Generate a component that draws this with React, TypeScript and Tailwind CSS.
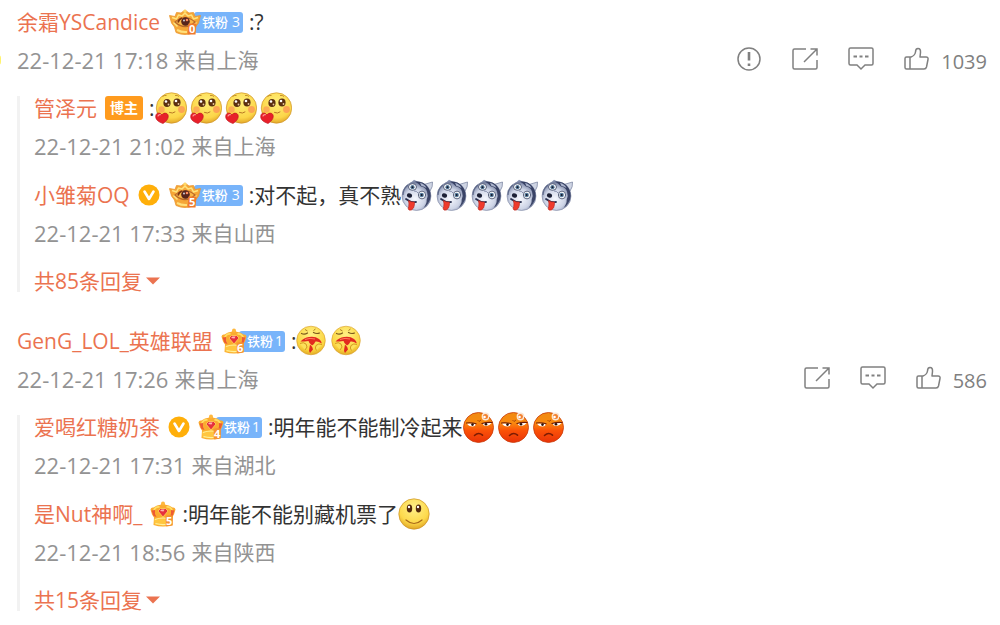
import type { ReactNode } from "react";

type EmojiKind = "love" | "husky" | "melon" | "angry" | "smile";

function LoveEmoji() {
  return (
    <svg className="h-8 w-8" viewBox="0 0 32 32" aria-hidden="true">
      <defs>
        <radialGradient id="love-face" cx="0.5" cy="0.3" r="0.75">
          <stop offset="0" stopColor="#ffee78" />
          <stop offset="0.7" stopColor="#fcd648" />
          <stop offset="1" stopColor="#dd9c22" />
        </radialGradient>
      </defs>
      <circle cx="16.5" cy="16" r="15.2" fill="url(#love-face)" stroke="#cf9228" strokeWidth="0.7" />
      <circle cx="6.5" cy="17.5" r="3.2" fill="#fc9a55" opacity="0.7" />
      <circle cx="26.5" cy="17.5" r="3.4" fill="#fc9a55" opacity="0.85" />
      <path d="M7.5 4.5q2-1.5 4-1M20 3.5q2.5-.5 4 1" fill="none" stroke="#b57b20" strokeWidth="0.8" />
      <ellipse cx="12" cy="11" rx="3.6" ry="4" fill="#5b2f10" />
      <ellipse cx="22" cy="10.5" rx="3.6" ry="4" fill="#5b2f10" />
      <circle cx="11" cy="9.5" r="1.3" fill="#fff" />
      <circle cx="21" cy="9" r="1.3" fill="#fff" />
      <circle cx="13.5" cy="12.5" r="0.9" fill="#e9c9a0" />
      <circle cx="23.5" cy="12" r="0.9" fill="#e9c9a0" />
      <path d="M14.5 20.5q3 1.5 5.5-.5" fill="none" stroke="#b06c1e" strokeWidth="0.9" strokeLinecap="round" />
      <path d="M8 31.5C3 30 0 27 .8 23.5c.7-3.2 4.5-3.3 6-.7 1.8-2.5 5.8-2.2 6.4.8.5 3-2 6-5.2 7.900z" fill="#e8202a" stroke="#b8101c" strokeWidth="0.6" />
      <path d="M3 24q.7-1.7 2.3-1.4" stroke="#ff9a9a" strokeWidth="1.2" fill="none" strokeLinecap="round" />
    </svg>
  );
}

function HuskyEmoji() {
  return (
    <svg className="h-8 w-8" viewBox="0 0 32 32" aria-hidden="true">
      <defs>
        <radialGradient id="husky-face" cx="0.45" cy="0.6" r="0.58">
          <stop offset="0" stopColor="#f6f8fe" />
          <stop offset="0.6" stopColor="#cdd4e6" />
          <stop offset="1" stopColor="#6f7a9c" />
        </radialGradient>
      </defs>
      <path d="M9 4.5 13 .8l4 2z" fill="#8a94b2" />
      <path d="M23 5.5 31.500 3q.5 5-2.500 9z" fill="#cfd5e4" stroke="#808aa6" strokeWidth="0.8" />
      <circle cx="15.5" cy="17" r="14.5" fill="url(#husky-face)" stroke="#7d86a2" strokeWidth="0.6" />
      <path d="M14 2.6q9-.5 13.5 6.400 4.500 8-.5 15.500-1.800 3-4.500 4.500 3.500-4.500 3.200-8.500 1.800-4 .3-8-1.500-4.500-6-5-3-3.500-6-4.900z" fill="#2c3558" opacity="0.85" />
      <path d="M19 4q4.5.8 6.500 5-3.500-2-5-2z" fill="#aab3cc" />
      <path d="M2 16q0-6 5-10" fill="none" stroke="#5d6888" strokeWidth="1.2" />
      <path d="M13 12q3 0 4 2" fill="none" stroke="#8a93ae" strokeWidth="1" />
      <ellipse cx="11.5" cy="8" rx="4" ry="3.3" fill="#fff" stroke="#49536f" strokeWidth="0.9" />
      <circle cx="11.5" cy="8.2" r="2.1" fill="#557a9c" />
      <circle cx="11.5" cy="8.2" r="1" fill="#141828" />
      <ellipse cx="21" cy="16" rx="3.6" ry="3.9" fill="#fff" stroke="#49536f" strokeWidth="0.9" />
      <circle cx="20.7" cy="16" r="2.2" fill="#557a9c" />
      <circle cx="20.7" cy="16" r="1" fill="#141828" />
      <ellipse cx="8.5" cy="16.5" rx="2.600" ry="2.200" fill="#1c2136" transform="rotate(20 8.5 16.5)" />
      <path d="M5 20q5 4 10 3" fill="none" stroke="#2c3352" strokeWidth="1.8" strokeLinecap="round" />
      <path d="M7.5 21.5q3.500 2 6 1.500.3 3.500-1 6-2 3-4.500 2-1.500-1-.3-3.500.5-2.500-.2-6z" fill="#ef3a2c" stroke="#b3231d" strokeWidth="0.6" />
    </svg>
  );
}

function MelonEmoji() {
  return (
    <svg className="h-8 w-8" viewBox="0 0 32 32" aria-hidden="true">
      <defs>
        <radialGradient id="melon-face" cx="0.5" cy="0.3" r="0.75">
          <stop offset="0" stopColor="#fff184" />
          <stop offset="0.7" stopColor="#fbd541" />
          <stop offset="1" stopColor="#dba01f" />
        </radialGradient>
      </defs>
      <circle cx="15" cy="15.5" r="14.3" fill="url(#melon-face)" stroke="#d79b28" strokeWidth="0.6" />
      <path d="M5.5 8.5q3 1.500 6-.5M17.5 7.5q3 1.700 6 .5" fill="none" stroke="#7c5a1c" strokeWidth="1.2" strokeLinecap="round" />
      <path d="M9 4.5 11.5 6M19.5 4l-2 1.5" stroke="#a5751d" strokeWidth="0.9" />
      <path d="M4.5 16.5Q8 12.5 13 12q6-1 10 2 3 2.5 2.500 4.500-3-2.500-6-2-1 2.500-3.500 4-3-2-3.500-4.500-4 .5-8 .5z" fill="#e22a1f" />
      <path d="M9 14.5q5-2 10-.5" fill="none" stroke="#ff7a5c" strokeWidth="1" />
      <path d="M14 19.5q2.5 2 3 5l-3 3.5q-1.500-2-.8-4z" fill="#e22a1f" />
      <path d="M4 18.5q3.500-1.800 6 .5 2.500 3-1 6M26 19.5q-3.500-1.500-6 1-1.500 2.500.5 5" fill="#fce05a" stroke="#cf921d" strokeWidth="0.9" />
    </svg>
  );
}

function AngryEmoji() {
  return (
    <svg className="h-8 w-8" viewBox="0 0 32 32" aria-hidden="true">
      <defs>
        <linearGradient id="angry-face" x1="0" y1="0" x2="0" y2="1">
          <stop offset="0" stopColor="#f08a10" />
          <stop offset="0.35" stopColor="#f98a10" />
          <stop offset="0.6" stopColor="#fb5208" />
          <stop offset="1" stopColor="#e83208" />
        </linearGradient>
      </defs>
      <circle cx="15.5" cy="16.5" r="15" fill="url(#angry-face)" stroke="#c93a08" strokeWidth="0.8" />
      <path d="M4 12.5h8.500q.5 3-3 3-4 0-5.500-3zM28.500 12h-9q.5 3 4 3 3.500-.5 5-3z" fill="#fff" />
      <path d="M3.500 12q5-.8 9.500.8M29 11.500q-5-.5-10 1" fill="none" stroke="#6e1c05" strokeWidth="1.2" strokeLinecap="round" />
      <circle cx="9.5" cy="13.6" r="1.3" fill="#2c0e04" />
      <circle cx="23" cy="13.3" r="1.3" fill="#2c0e04" />
      <path d="M11.5 24.5q4-3.800 8-.3" fill="none" stroke="#7c1c04" strokeWidth="1.6" strokeLinecap="round" />
      <path d="m14.5 9 1.500 1.500L18 9" fill="none" stroke="#a4410a" strokeWidth="0.9" />
      <circle cx="22.5" cy="5.5" r="3.2" fill="#f2812f" stroke="#fbe6d4" strokeWidth="1.4" />
      <circle cx="21.5" cy="6" r="1.3" fill="#fff" />
    </svg>
  );
}

function SmileEmoji() {
  return (
    <svg className="h-8 w-8" viewBox="0 0 32 32" aria-hidden="true">
      <defs>
        <radialGradient id="smile-face" cx="0.5" cy="0.3" r="0.75">
          <stop offset="0" stopColor="#fff08a" />
          <stop offset="0.65" stopColor="#fdd94b" />
          <stop offset="1" stopColor="#d99a1c" />
        </radialGradient>
      </defs>
      <circle cx="16" cy="16" r="15.2" fill="url(#smile-face)" stroke="#cb9226" strokeWidth="0.7" />
      <ellipse cx="11.5" cy="10.5" rx="2.7" ry="4" fill="#54290c" />
      <ellipse cx="20.5" cy="10.5" rx="2.7" ry="4" fill="#54290c" />
      <circle cx="11" cy="9" r="1.2" fill="#fff" />
      <circle cx="20" cy="9" r="1.2" fill="#fff" />
      <path d="M8 22q8 7 16 0" fill="none" stroke="#a8681a" strokeWidth="1.2" strokeLinecap="round" />
    </svg>
  );
}

const emojis: Record<EmojiKind, () => ReactNode> = {
  love: LoveEmoji,
  husky: HuskyEmoji,
  melon: MelonEmoji,
  angry: AngryEmoji,
  smile: SmileEmoji,
};

function Verified() {
  return (
    <svg className="h-[22px] w-[22px] shrink-0" viewBox="0 0 22 22" role="img" aria-label="认证">
      <circle cx="11" cy="11" r="10.5" fill="#ffaf0a" />
      <path d="m6.5 7.5 4.5 7.5 4.5-7.5" fill="none" stroke="#fff" strokeWidth="2.6" strokeLinecap="round" strokeLinejoin="round" />
    </svg>
  );
}

function WingedCrown({ rank }: { rank: string }) {
  return (
    <svg className="relative h-[26px] w-[34px] shrink-0 overflow-visible" viewBox="-1 0 34 26" aria-hidden="true">
      <path d="M.5 6.5 6 7.5l1.5-4L12 4l4-3 4 3 4.5-.5 1.500 4 5.500-1-2 7.500-3 4-1.500 5.500q-9 4-18 0L5.500 18l-3-4z" fill="#f6a637" stroke="#ea9730" strokeWidth="0.8" strokeLinejoin="round" />
      <path d="M3 8.5 7.500 10l2-4 3.500 1 3-3 3 3 3.500-1 2 4L29 8.500M4.500 13.500l4 4M27.500 13.500l-4 4" fill="none" stroke="#ffe37d" strokeWidth="1.6" strokeLinejoin="round" />
      <path d="M6 13Q16 4.500 26 13 16 22 6 13z" fill="#fbb746" stroke="#b8682a" strokeWidth="1.2" />
      <path d="M9 13.5q1-3.500 4-4.500" fill="none" stroke="#7c3516" strokeWidth="1.6" />
      <circle cx="16.5" cy="12.5" r="4.3" fill="#57241d" />
      <circle cx="18" cy="11" r="1.3" fill="#ff8d62" />
      <circle cx="15" cy="11.5" r="0.9" fill="#dbe0ea" />
      <path d="M8 21q5 2.500 10 2" fill="none" stroke="#ffe07c" strokeWidth="2" />
      <circle cx="16" cy="2.2" r="1.6" fill="#ffd765" />
      <path d="M19.500 14.500h8L26.500 25.500H18.500z" fill="#ef7a2e" />
      <text x="20" y="24" fontSize="11" fontWeight="700" fill="#fff">{rank}</text>
    </svg>
  );
}

function Crown({ rank }: { rank: string }) {
  return (
    <svg className="relative h-[26px] w-[26px] shrink-0 overflow-visible" viewBox="0 0 26 26" aria-hidden="true">
      <path d="M.5 8.5Q1 6 3.500 6.500L7 4.500l3.500-.8L13 1.500l2.500 2.200 3.500.8 3.500 2q2.500-.5 3 2l-1.500 5-2 3 .5 7.500q-9.500 3-19 0l.5-7.500-2-3z" fill="#fbab2f" />
      <path d="M3.500 11q1-5.500 6-5M22.500 11q-1-5.500-6-5" fill="none" stroke="#ffdd63" strokeWidth="1.8" />
      <circle cx="13" cy="2.5" r="2" fill="#ffb83e" />
      <path d="M1.500 9.500 5 9v4l1.500 3-3-1zM24.500 9.500 21 9v4l-1.500 3 3-1z" fill="#ee5a34" />
      <path d="M8 10 10.500 7.500h5L18 10l-5 6z" fill="#e6303e" stroke="#ffd55c" strokeWidth="0.8" />
      <path d="M10 10l1.500-1.500h3l-1 2z" fill="#ffb5b0" />
      <path d="M4 18q9-3.500 18 0l-.5 5.500q-8.500 2-17 0z" fill="#ffc640" />
      <path d="M5 18.500q8-3 16 0M5.500 22.500q5 1.500 10 1" fill="none" stroke="#fff09a" strokeWidth="1.2" />
      <path d="M15.5 15q3.500-2 7.500 0l-.3 9.500q-3 1-6.700.8z" fill="#f69331" />
      <text x="16" y="24" fontSize="11" fontWeight="700" fill="#fff">{rank}</text>
    </svg>
  );
}

function FanBadge({ level, rank }: { level: 1 | 3; rank: string }) {
  return (
    <span className="flex shrink-0 items-center">
      {level === 3 ? <WingedCrown rank={rank} /> : <Crown rank={rank} />}
      <span
        className={`-ml-2 flex h-[21px] items-center rounded-[3px] bg-[#78b4fa] pl-2 text-[13px] font-medium text-white ${
          level === 3 ? "gap-1 pr-[3px]" : "gap-0.5 pr-0.5"
        }`}
      >
        铁粉<span className="text-[14px]">{level}</span>
      </span>
    </span>
  );
}

function CommentLine({ name, badges, text, emoji, count = 0 }: {
  name: string;
  badges?: ReactNode;
  text: string;
  emoji?: EmojiKind;
  count?: number;
}) {
  const Emoji = emoji ? emojis[emoji] : null;
  return (
    <div className="flex h-6 items-center whitespace-nowrap">
      <a href="#" className="text-[#eb7350]">{name}</a>
      {badges && <span className="ml-2 flex items-center gap-2">{badges}</span>}
      <p className="ml-[6px] flex items-center text-[#333]">
        {text}
        {Emoji && (
          <span className="flex gap-[3px]">
            {Array.from({ length: count }, (_, i) => <Emoji key={i} />)}
          </span>
        )}
      </p>
    </div>
  );
}

function Meta({ time, place }: { time: string; place: string }) {
  return (
    <p className="flex h-6 items-center gap-[6px] whitespace-nowrap text-[#939393]">
      <time className="text-[22px]">{time}</time>
      <span>来自{place}</span>
    </p>
  );
}

const iconProps = {
  className: "h-[26px] w-[26px]",
  viewBox: "0 0 26 26",
  fill: "none",
  stroke: "currentColor",
  strokeWidth: 1.5,
  "aria-hidden": true,
} as const;

function Actions({ likes, report = false }: { likes: number; report?: boolean }) {
  return (
    <div className="flex items-center gap-[30px] pb-0.5 text-[#808080]">
      {report && (
        <button type="button" aria-label="举报">
          <svg {...iconProps}>
            <circle cx="13" cy="13" r="11" />
            <path d="M13 6v8.5M13 17.5V20" strokeWidth="2.6" />
          </svg>
        </button>
      )}
      <button type="button" aria-label="转发">
        <svg {...iconProps}>
          <path d="M14 3H2.500Q1 3 1 4.500v17Q1 23 2.500 23h21q1.500 0 1.500-1.500V14M12 16 24.500 3.500M18.500 3H25v6.500" />
        </svg>
      </button>
      <button type="button" aria-label="评论">
        <svg {...iconProps}>
          <path d="M2.500 2h21Q25 2 25 3.500v14q0 1.500-1.500 1.500H17l-4 4-4-4H2.500Q1 19 1 17.500v-14Q1 2 2.500 2z" />
          <path d="M5.5 10.5H9M11.500 10.500h3M17 10.500h3.500" strokeWidth="2" />
        </svg>
      </button>
      <button type="button" aria-label={`赞 ${likes}`} className="flex items-center gap-[11px]">
        <svg {...iconProps}>
          <path d="M6 11v12M2.500 11H7q4-1.500 4.500-5 0-3.500 2.500-3.500 2.800 0 2.500 4L16 11h6q2.500 0 2 2.500l-1.500 7.500q-.5 2-2.500 2H2.500Q1 23 1 21.500v-9Q1 11 2.500 11z" strokeLinejoin="round" />
        </svg>
        <span className="pt-1.5 text-[20px]">{likes}</span>
      </button>
    </div>
  );
}

function ReplyCount({ total }: { total: number }) {
  return (
    <button type="button" className="flex h-[22px] items-center gap-1 text-[#eb7350]">
      共{total}条回复
      <svg className="h-2 w-3.5" viewBox="0 0 14 8" aria-hidden="true">
        <path d="M0 .5h14L7 7.500z" fill="currentColor" />
      </svg>
    </button>
  );
}

function Item({ children }: { children: ReactNode }) {
  return <div className="flex flex-col gap-3.5">{children}</div>;
}

function Replies({ children }: { children: ReactNode }) {
  return (
    <div className="mt-6 flex flex-col items-start gap-[25px] border-l-[3px] border-[#f2f2f2] pl-[14px]">
      {children}
    </div>
  );
}

export default function App() {
  return (
    <main className="flex flex-col gap-[37px] overflow-hidden bg-white pt-[10px] pr-[13px] pb-3 pl-[17px] font-['Open_Sans','Noto_Sans_CJK_SC',sans-serif] text-[21px] leading-6">
      <article>
        <Item>
          <CommentLine name="余霜YSCandice" badges={<FanBadge level={3} rank="0" />} text=":?" />
          <div className="relative flex h-6 items-center justify-between">
            <span className="absolute -left-5.5 h-2.5 w-1.5 rounded-full bg-[#fff36b]" />
            <Meta time="22-12-21 17:18" place="上海" />
            <Actions likes={1039} report />
          </div>
        </Item>
        <Replies>
          <Item>
            <CommentLine
              name="管泽元"
              badges={<span className="rounded-[3px] bg-[#ff9b1e] px-[5px] text-[14px] font-bold text-white">博主</span>}
              text=":"
              emoji="love"
              count={4}
            />
            <Meta time="22-12-21 21:02" place="上海" />
          </Item>
          <Item>
            <CommentLine
              name="小雏菊OQ"
              badges={<><Verified /><FanBadge level={3} rank="5" /></>}
              text=":对不起，真不熟"
              emoji="husky"
              count={5}
            />
            <Meta time="22-12-21 17:33" place="山西" />
          </Item>
          <ReplyCount total={85} />
        </Replies>
      </article>

      <article>
        <Item>
          <CommentLine name="GenG_LOL_英雄联盟" badges={<FanBadge level={1} rank="6" />} text=":" emoji="melon" count={2} />
          <div className="flex h-6 items-center justify-between">
            <Meta time="22-12-21 17:26" place="上海" />
            <Actions likes={586} />
          </div>
        </Item>
        <Replies>
          <Item>
            <CommentLine
              name="爱喝红糖奶茶"
              badges={<><Verified /><FanBadge level={1} rank="4" /></>}
              text=":明年能不能制冷起来"
              emoji="angry"
              count={3}
            />
            <Meta time="22-12-21 17:31" place="湖北" />
          </Item>
          <Item>
            <CommentLine name="是Nut神啊_" badges={<Crown rank="5" />} text=":明年能不能别藏机票了" emoji="smile" count={1} />
            <Meta time="22-12-21 18:56" place="陕西" />
          </Item>
          <ReplyCount total={15} />
        </Replies>
      </article>
    </main>
  );
}
